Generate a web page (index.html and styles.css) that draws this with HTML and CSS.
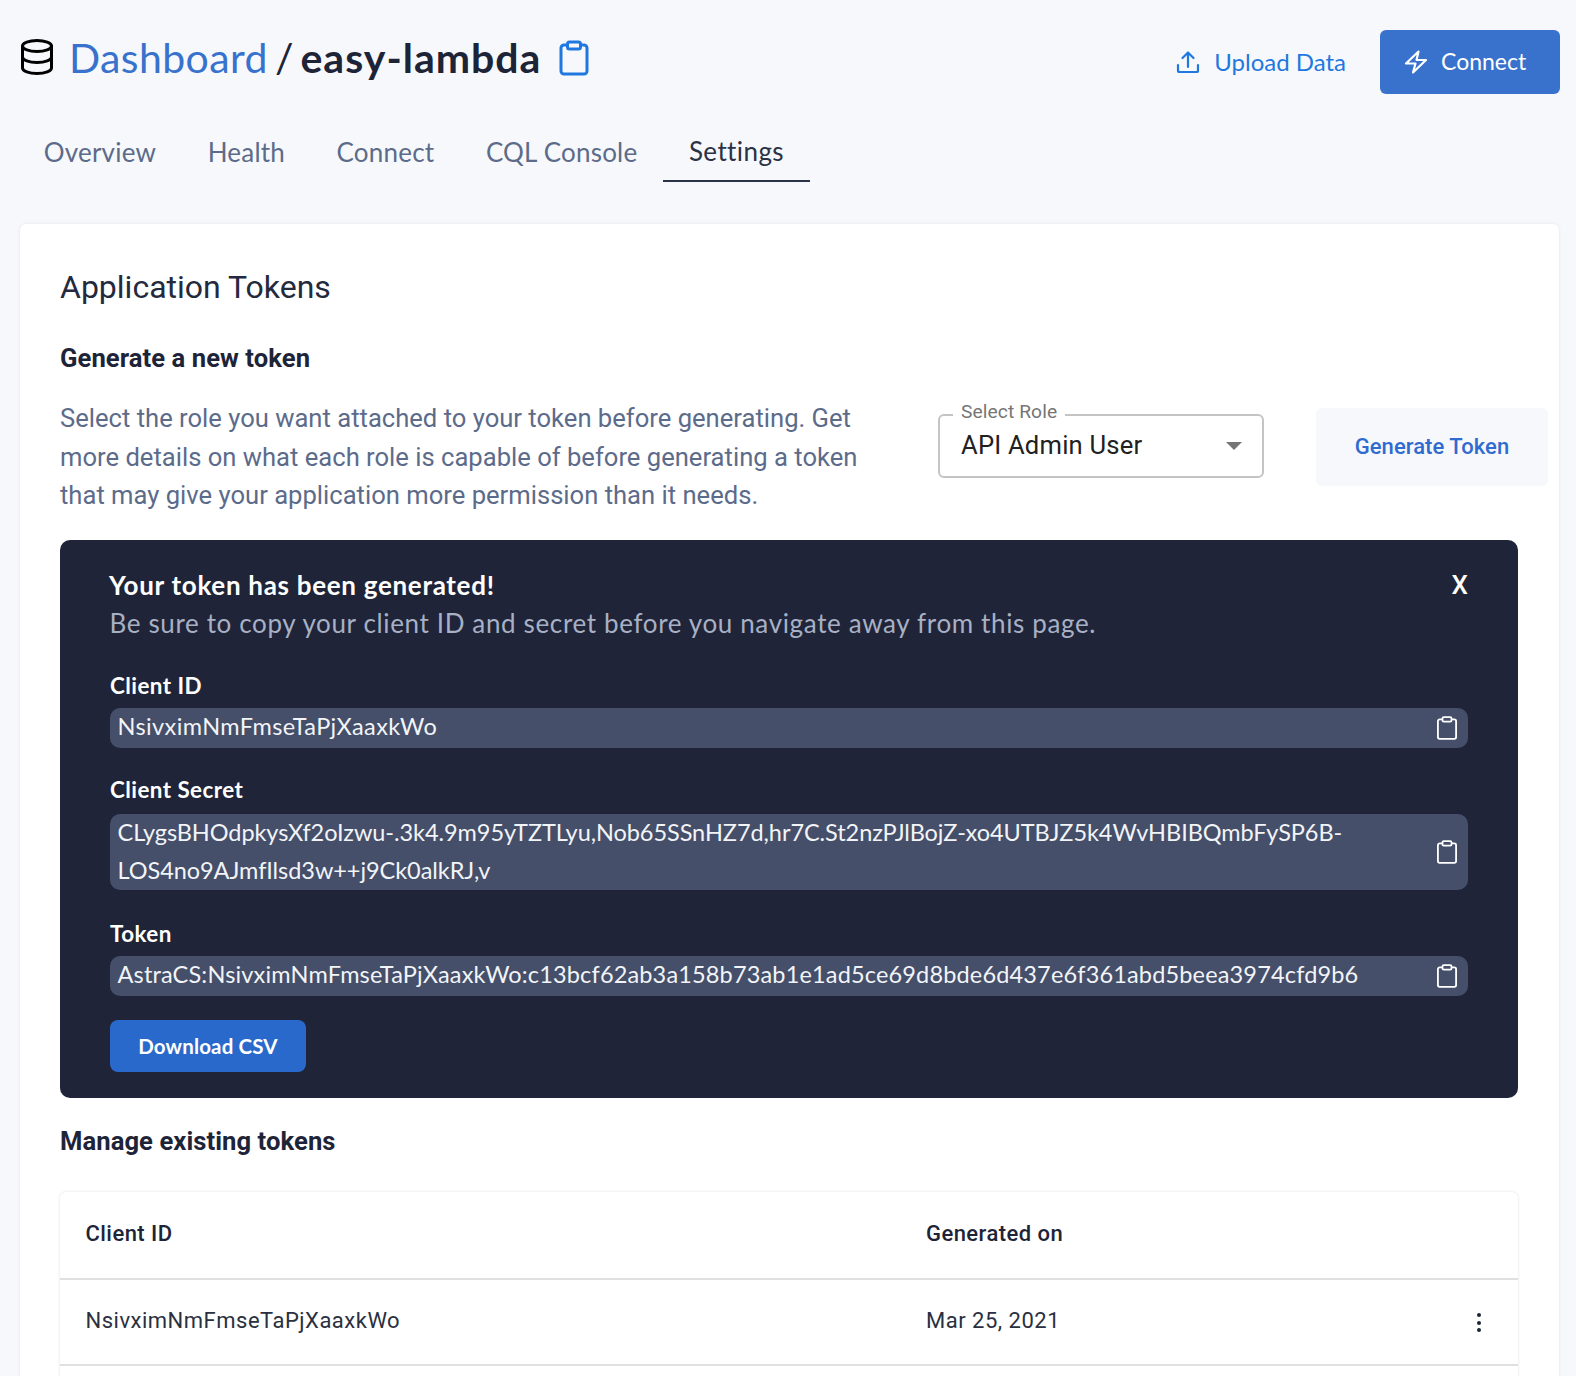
FILE: index.html
```html
<!DOCTYPE html>
<html lang="en">
<head>
<meta charset="utf-8">
<title>easy-lambda</title>
<link rel="stylesheet" href="styles.css">
</head>
<body>
<header class="topbar">
  <div class="crumbs">
    <svg class="db-icon" viewBox="0 0 34 36" fill="none" stroke="#000" stroke-width="3" stroke-linecap="round" stroke-linejoin="round"><ellipse cx="17" cy="7" rx="14.5" ry="5.5"/><path d="M2.5 7v22c0 3 6.5 5.5 14.500 5.500s14.500-2.500 14.500-5.500V7"/><path d="M2.500 18c0 3 6.500 5.500 14.500 5.500s14.500-2.500 14.500-5.500"/></svg>
    <h1 class="crumb-title"><a class="crumb-link">Dashboard</a> / <strong>easy-lambda</strong></h1>
    <svg class="title-clip" viewBox="0 0 30 36" fill="none" stroke="#1f78e0" stroke-width="3" stroke-linejoin="round"><path d="M8.500 5H5a3 3 0 0 0-3 3v23a3 3 0 0 0 3 3h20a3 3 0 0 0 3-3V8a3 3 0 0 0-3-3h-3.500"/><rect x="8.500" y="2" width="13" height="7" rx="2"/></svg>
  </div>
  <div class="actions">
    <a class="upload">
      <svg class="upload-icon" viewBox="0 0 24 24" fill="none" stroke="#1f78e0" stroke-width="2.200" stroke-linecap="round" stroke-linejoin="round"><path d="M2 15v5.500a1.500 1.500 0 0 0 1.500 1.500h17a1.500 1.500 0 0 0 1.500-1.500V15"/><path d="M12 17V2.500M6.500 8 12 2.500 17.500 8"/></svg>
      <span class="action-text">Upload Data</span>
    </a>
    <button class="connect">
      <svg class="zap-icon" viewBox="0 0 24 24" fill="none" stroke="#fff" stroke-width="2.200" stroke-linejoin="round"><path d="M14.500 1.500 2 13.500h9.500L9 22.500l13-12.500h-9.500z"/></svg>
      <span class="action-text">Connect</span>
    </button>
  </div>
</header>
<nav class="tabs">
  <a class="tab">Overview</a>
  <a class="tab">Health</a>
  <a class="tab">Connect</a>
  <a class="tab">CQL Console</a>
  <a class="tab tab-active">Settings</a>
</nav>
<main class="card">
  <h2 class="card-title">Application Tokens</h2>
  <h3 class="section-title">Generate a new token</h3>
  <div class="generate-row">
    <p class="intro">Select the role you want attached to your token before generating. Get more details on what each role is capable of before generating a token that may give your application more permission than it needs.</p>
    <div class="select">
      <span class="select-label">Select Role</span>
      <span class="select-value">API Admin User</span>
      <span class="select-arrow"></span>
    </div>
    <button class="generate">Generate Token</button>
  </div>
  <section class="panel">
    <div class="panel-head">
      <div>
        <div class="panel-title">Your token has been generated!</div>
        <div class="panel-sub">Be sure to copy your client ID and secret before you navigate away from this page.</div>
      </div>
      <span class="panel-close">X</span>
    </div>
    <div class="field-label">Client ID</div>
    <div class="field">
      <span class="field-text text-id">NsivximNmFmseTaPjXaaxkWo</span>
      <svg class="field-clip" viewBox="0 0 22 26" fill="none" stroke="#fff" stroke-width="2" stroke-linejoin="round"><path d="M6 3.500H3a2 2 0 0 0-2 2V23a2 2 0 0 0 2 2h16a2 2 0 0 0 2-2V5.500a2 2 0 0 0-2-2h-3"/><rect x="6" y="1" width="10" height="5" rx="1.500"/></svg>
    </div>
    <div class="field-label label-secret">Client Secret</div>
    <div class="field">
      <span class="field-text text-secret">CLygsBHOdpkysXf2oIzwu-.3k4.9m95yTZTLyu,Nob65SSnHZ7d,hr7C.St2nzPJlBojZ-xo4UTBJZ5k4WvHBIBQmbFySP6B-<br>LOS4no9AJmfIlsd3w++j9Ck0alkRJ,v</span>
      <svg class="field-clip" viewBox="0 0 22 26" fill="none" stroke="#fff" stroke-width="2" stroke-linejoin="round"><path d="M6 3.500H3a2 2 0 0 0-2 2V23a2 2 0 0 0 2 2h16a2 2 0 0 0 2-2V5.500a2 2 0 0 0-2-2h-3"/><rect x="6" y="1" width="10" height="5" rx="1.500"/></svg>
    </div>
    <div class="field-label">Token</div>
    <div class="field">
      <span class="field-text">AstraCS:NsivximNmFmseTaPjXaaxkWo:c13bcf62ab3a158b73ab1e1ad5ce69d8bde6d437e6f361abd5beea3974cfd9b6</span>
      <svg class="field-clip" viewBox="0 0 22 26" fill="none" stroke="#fff" stroke-width="2" stroke-linejoin="round"><path d="M6 3.500H3a2 2 0 0 0-2 2V23a2 2 0 0 0 2 2h16a2 2 0 0 0 2-2V5.500a2 2 0 0 0-2-2h-3"/><rect x="6" y="1" width="10" height="5" rx="1.500"/></svg>
    </div>
    <button class="download">Download CSV</button>
  </section>
  <h3 class="section-title manage">Manage existing tokens</h3>
  <div class="table">
    <div class="row row-head">
      <span class="col-id">Client ID</span>
      <span class="col-date">Generated on</span>
    </div>
    <div class="row">
      <span class="col-id">NsivximNmFmseTaPjXaaxkWo</span>
      <span class="col-date">Mar 25, 2021</span>
      <span class="dots"><i></i><i></i><i></i></span>
    </div>
    <div class="row row-empty"></div>
  </div>
</main>
</body>
</html>
```
FILE: styles.css
```css
* { box-sizing: border-box; }
html, body { margin: 0; height: 1376px; overflow: hidden; }
body {
  background: #f7f8fb;
  font-family: "Lato", "Liberation Sans", sans-serif;
  color: #1e2438;
}
button { font-family: inherit; border: 0; padding: 0; }

.topbar {
  display: flex;
  justify-content: space-between;
  align-items: center;
  height: 64px;
  margin-top: 30px;
  padding: 0 16px 0 20px;
}
.crumbs { display: flex; align-items: center; padding-bottom: 8px; }
.db-icon { width: 34px; height: 36px; margin: -2px 15px 0 0; flex: none; }
.crumb-title {
  margin: 0;
  font-size: 41px;
  font-weight: 400;
  line-height: 56px;
  word-spacing: -3.500px;
  white-space: nowrap;
}
.crumb-link { color: #3872cc; letter-spacing: 0.4px; }
.crumb-title strong { font-weight: 700; letter-spacing: 1px; }
.title-clip { width: 30px; height: 36px; margin-left: 18px; flex: none; }

.actions { display: flex; align-items: center; }
.upload {
  display: flex;
  align-items: center;
  font-size: 24px;
  color: #1f78e0;
  margin-right: 34px;
}
.action-text { padding-bottom: 2px; }
.upload-icon { width: 24px; height: 24px; margin-right: 14px; }
.connect {
  display: flex;
  align-items: center;
  width: 180px;
  height: 64px;
  padding-left: 24px;
  background: #3872cc;
  color: #fff;
  font-size: 23px;
  border-radius: 6px;
}
.zap-icon { width: 24px; height: 24px; margin-right: 13px; }

.tabs { display: flex; height: 88px; padding-left: 18px; margin-bottom: 42px; }
.tab {
  display: flex;
  align-items: center;
  height: 88px;
  padding: 28px 25.800px 0;
  font-size: 26px;
  letter-spacing: 0.2px;
  color: #5c6b8a;
}
.tab-active { color: #2a3245; border-bottom: 2px solid #2a3245; letter-spacing: 0.4px; }

.card {
  width: 1539px;
  height: 1200px;
  margin-left: 20px;
  padding: 40px;
  background: #fff;
  border-radius: 6px;
  box-shadow: 0 0 3px rgba(30, 36, 56, 0.1);
  font-family: "Roboto", sans-serif;
}
.card-title {
  margin: 0;
  font-size: 32px;
  font-weight: 400;
  line-height: 46px;
  color: #232a3d;
}
.section-title {
  margin: 31px 0 0;
  font-size: 25.600px;
  font-weight: 700;
  letter-spacing: 0.07px;
  line-height: 34px;
  color: #1e2438;
}
.generate-row {
  display: flex;
  align-items: center;
  height: 114px;
  margin-top: 25px;
}
.intro {
  width: 810px;
  margin: 0;
  font-size: 25.600px;
  line-height: 38.400px;
  color: #5c6b8a;
  flex: none;
}
.select {
  position: relative;
  display: flex;
  align-items: center;
  width: 326px;
  height: 64px;
  margin: 0 0 22px 68px;
  padding: 0 0 3px 21px;
  border: 2px solid #c4c4c4;
  border-radius: 6px;
  flex: none;
}
.select-label {
  position: absolute;
  top: -16px;
  left: 13px;
  padding: 0 8px;
  background: #fff;
  font-size: 19.200px;
  letter-spacing: 0.1px;
  line-height: 24px;
  color: #757575;
}
.select-value { font-size: 25.600px; letter-spacing: 0.2px; color: #212121; }
.select-arrow {
  position: absolute;
  right: 20px;
  top: 26px;
  border-left: 8px solid transparent;
  border-right: 8px solid transparent;
  border-top: 8px solid #757575;
}
.generate {
  width: 232px;
  height: 78px;
  margin: 0 0 21px 52px;
  background: #f7f8fb;
  border-radius: 6px;
  color: #2f6bd0;
  font-family: "Roboto", sans-serif;
  font-size: 22px;
  letter-spacing: 0.05px;
  font-weight: 500;
  flex: none;
}

.panel {
  width: 1458px;
  height: 558px;
  margin-top: 26px;
  padding: 26px 50px 0;
  background: #1f2438;
  border-radius: 10px;
  font-family: "Lato", sans-serif;
  color: #fff;
}
.panel-head { display: flex; justify-content: space-between; }
.panel-title { font-size: 26px; font-weight: 700; letter-spacing: 0.7px; line-height: 38px; margin-left: -1px; }
.panel-sub { font-size: 26px; letter-spacing: 0.64px; line-height: 38px; color: #a7b0c4; margin-left: -0.500px; }
.panel-close {
  font-family: "Roboto", sans-serif;
  font-size: 26px;
  font-weight: 500;
  line-height: 38px;
}
.field-label {
  margin: 25px 0 3px;
  font-size: 22.400px;
  font-weight: 700;
  letter-spacing: 0.45px;
  line-height: 38px;
}
.label-secret { margin: 23px 0 5px; }
.field {
  display: flex;
  justify-content: space-between;
  align-items: center;
  width: 1358px;
  min-height: 40px;
  padding: 0 11px 0 7.500px;
  background: #454f69;
  border-radius: 10px;
}
.field-text {
  align-self: flex-start;
  margin: -1px 0 1px;
  font-size: 23.500px;
  letter-spacing: 0.16px;
  line-height: 38px;
  color: #f2f4f8;
  white-space: nowrap;
}
.text-id { letter-spacing: 0.38px; }
.text-secret { letter-spacing: -0.06px; }
.field-clip { width: 20px; height: 24px; flex: none; }
.download {
  display: block;
  width: 196px;
  height: 52px;
  margin-top: 24px;
  background: #2a69cc;
  border-radius: 8px;
  color: #fff;
  font-size: 20.500px;
  letter-spacing: 0.15px;
  font-weight: 700;
}

.manage { margin-top: 26px; }
.table {
  width: 1458px;
  margin-top: 34px;
  background: #fff;
  border-radius: 6px 6px 0 0;
  box-shadow: 0 0 3px rgba(30, 36, 56, 0.14);
  font-family: "Roboto", sans-serif;
  font-size: 22px;
  color: #2a3040;
}
.row {
  position: relative;
  display: flex;
  align-items: center;
  height: 86px;
  padding: 0 0 4px 25.500px;
  border-bottom: 2px solid #e0e0e0;
  letter-spacing: 0.5px;
}
.row-head { font-weight: 500; height: 88px; padding-bottom: 3px; color: #1e2438; letter-spacing: 0.45px; }
.row-empty { border: 0; height: 60px; }
.col-id { width: 840.500px; }
.dots {
  position: absolute;
  right: 37px;
  top: 33px;
  display: flex;
  flex-direction: column;
  gap: 3.500px;
}
.dots i { width: 4px; height: 4px; border-radius: 50%; background: #1e2438; }
```
